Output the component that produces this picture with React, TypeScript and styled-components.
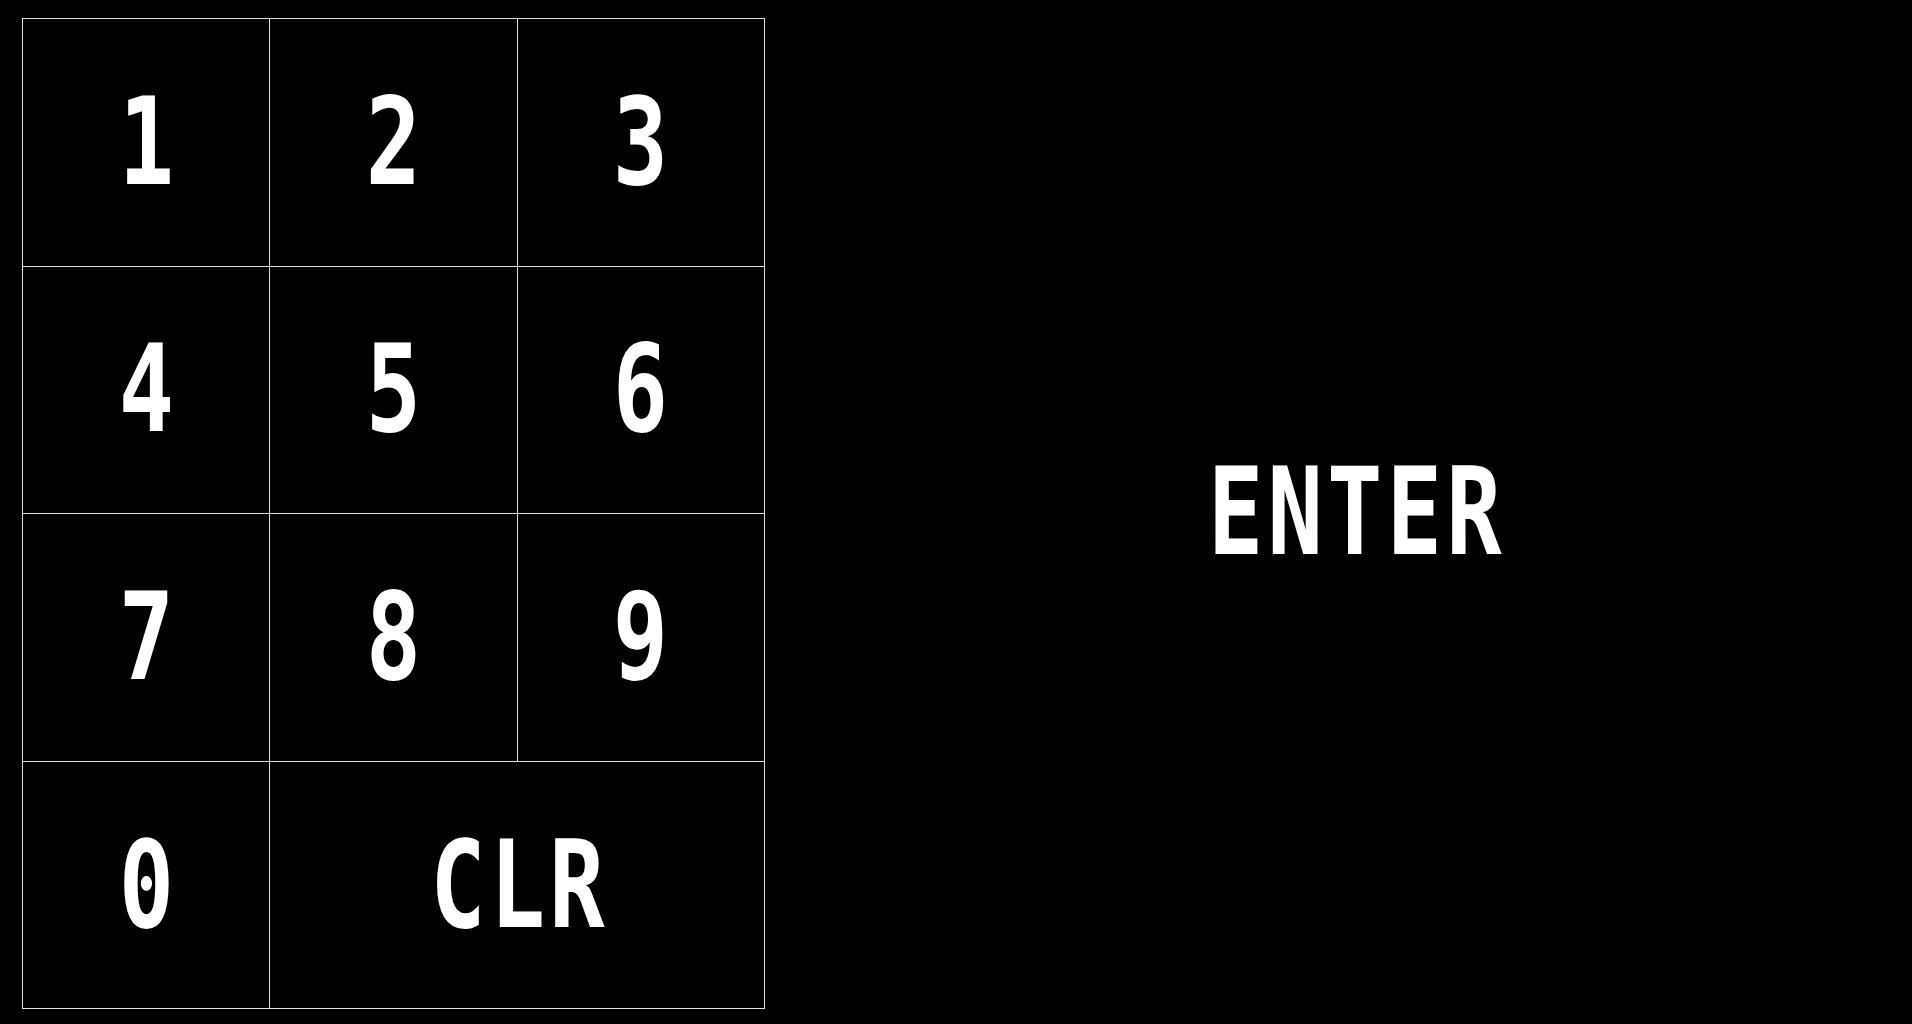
import React from "react";
import styled, { createGlobalStyle } from "styled-components";

const GlobalStyle = createGlobalStyle`
  html, body {
    margin: 0;
    padding: 0;
    background: #000;
    width: 1912px;
    height: 1024px;
    overflow: hidden;
  }
  #root { height: 1024px; }
`;

const Page = styled.div`
  display: flex;
  height: 1024px;
  padding: 18px 0 0 22px;
  box-sizing: border-box;
  background: #000;
  font-family: "DejaVu Sans Mono", "Liberation Mono", monospace;
  color: #fff;
`;

const Keypad = styled.div`
  display: grid;
  grid-template-columns: repeat(3, 247.3px);
  grid-template-rows: repeat(4, 247.6px);
  border-left: 1px solid #e2e2e2;
  border-top: 1px solid #e2e2e2;
  align-self: flex-start;
`;

const Key = styled.div<{ $span?: number }>`
  grid-column: span ${(p) => p.$span ?? 1};
  box-sizing: border-box;
  border-right: 1px solid #e2e2e2;
  border-bottom: 1px solid #e2e2e2;
  display: flex;
  align-items: center;
  justify-content: center;
`;

const Label = styled.span<{ $word?: boolean }>`
  display: inline-block;
  font-size: 121px;
  font-weight: 700;
  line-height: 1;
  letter-spacing: ${(p) => (p.$word ? "5.5px" : "0")};
  margin-right: ${(p) => (p.$word ? "-5.5px" : "0")};
  transform: scaleX(0.76);
  color: #fff;
`;

const EnterPanel = styled.div`
  flex: 1;
  margin-left: 32px;
  margin-top: -18px;
  display: flex;
  align-items: center;
  justify-content: center;
`;

const keys = ["1", "2", "3", "4", "5", "6", "7", "8", "9", "0"];

export default function App() {
  return (
    <>
      <GlobalStyle />
      <Page>
        <Keypad>
          {keys.map((k) => (
            <Key key={k}>
              <Label>{k}</Label>
            </Key>
          ))}
          <Key $span={2}>
            <Label $word>CLR</Label>
          </Key>
        </Keypad>
        <EnterPanel>
          <Label $word>ENTER</Label>
        </EnterPanel>
      </Page>
    </>
  );
}
